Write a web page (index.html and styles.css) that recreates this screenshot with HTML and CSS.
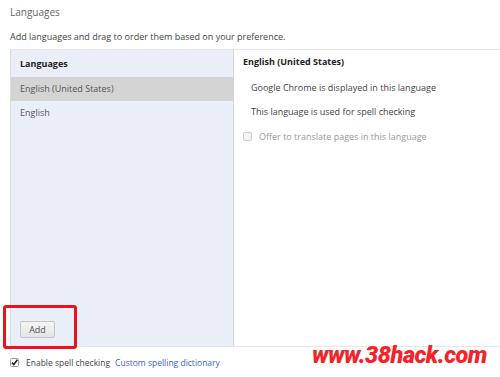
FILE: index.html
```html
<!DOCTYPE html>
<html>
<head>
<meta charset="utf-8">
<link rel="stylesheet" href="styles.css">
</head>
<body>
<div class="page">
  <h1 class="title">Languages</h1>
  <p class="desc">Add languages and drag to order them based on your preference.</p>
  <div class="panel">
    <div class="list">
      <div class="list-head">Languages</div>
      <div class="item selected">English (United States)</div>
      <div class="item">English</div>
      <div class="spacer"></div>
      <div class="add-wrap">
        <button class="add">Add</button>
        <div class="highlight"></div>
      </div>
    </div>
    <div class="detail">
      <div class="detail-head">English (United States)</div>
      <div class="info">Google Chrome is displayed in this language</div>
      <div class="info">This language is used for spell checking</div>
      <label class="offer"><span class="box"></span>Offer to translate pages in this language</label>
    </div>
  </div>
  <div class="footer">
    <span class="check">
      <svg width="9" height="9" viewBox="0 0 9 9"><rect x="0.5" y="0.5" width="8" height="8" rx="1" fill="#fff" stroke="#9a9a9a"/><path d="M2 4.6 L3.8 6.6 L7.4 1.8" fill="none" stroke="#222" stroke-width="1.6"/></svg>
    </span>
    <span class="footer-label">Enable spell checking</span>
    <a class="link">Custom spelling dictionary</a>
  </div>
  <div class="watermark">www.38hack.com</div>
</div>
</body>
</html>
```
FILE: styles.css
```css
* { box-sizing: border-box; }
html, body { margin: 0; padding: 0; background: #fff; }
body {
  width: 500px;
  height: 377px;
  overflow: hidden;
  font-family: "Open Sans", "Noto Sans", sans-serif;
  font-size: 9px;
  color: #333;
}
.page { position: relative; padding: 0 0 0 10px; }
.title {
  margin: 0;
  padding-top: 5px;
  height: 28px;
  font-size: 10px;
  font-weight: normal;
  color: #666;
}
.desc {
  margin: 0;
  height: 21px;
  padding-top: 2px;
  color: #444;
}
.panel {
  display: flex;
  height: 298px;
  border-top: 1px solid #e6e6e6;
  border-bottom: 1px solid #e6e6e6;
}
.list {
  width: 224px;
  background: #eaeef9;
  border-left: 1px solid #dcdcdc;
  border-right: 1px solid #d6d6d6;
  display: flex;
  flex-direction: column;
}
.list-head {
  height: 27px;
  line-height: 28px;
  padding-left: 9px;
  font-weight: bold;
  color: #222;
}
.item {
  height: 24px;
  line-height: 24px;
  padding-left: 9px;
  color: #555;
}
.item.selected { background: #d4d4d4; }
.spacer { flex: 1; }
.add-wrap { position: relative; height: 50px; padding-left: 9px; padding-top: 25px; }
.add {
  display: block;
  width: 35px;
  height: 17px;
  padding: 0;
  font-family: inherit;
  font-size: 9px;
  color: #555;
  background: linear-gradient(#f5f5f5, #e4e4e4);
  border: 1px solid #c6c6c6;
  border-radius: 2px;
}
.highlight {
  position: absolute;
  left: -8px;
  top: 9px;
  width: 74px;
  height: 44px;
  border: 3px solid #e8141c;
  border-radius: 3px;
}
.detail {
  flex: 1;
  padding-left: 9px;
}
.detail-head {
  height: 26px;
  line-height: 24px;
  font-weight: bold;
  color: #222;
}
.info {
  height: 24px;
  line-height: 24px;
  padding-left: 8px;
  color: #444;
}
.offer {
  display: flex;
  align-items: center;
  height: 24px;
  color: #999;
}
.box {
  width: 9px;
  height: 9px;
  border: 1px solid #cfcfcf;
  border-radius: 2px;
  background: #f4f4f4;
  margin-right: 7px;
}
.footer {
  display: flex;
  align-items: center;
  height: 30px;
  font-size: 8.5px;
  color: #444;
}
.check { display: flex; margin-right: 7px; }
.footer-label { margin-right: 5px; }
.link { color: #3b5fc0; }
.watermark {
  position: absolute;
  left: 312px;
  top: 341px;
  font-family: Roboto, sans-serif;
  font-weight: 900;
  font-style: italic;
  font-size: 23.5px;
  color: #f2242a;
  letter-spacing: -0.5px;
}
```
